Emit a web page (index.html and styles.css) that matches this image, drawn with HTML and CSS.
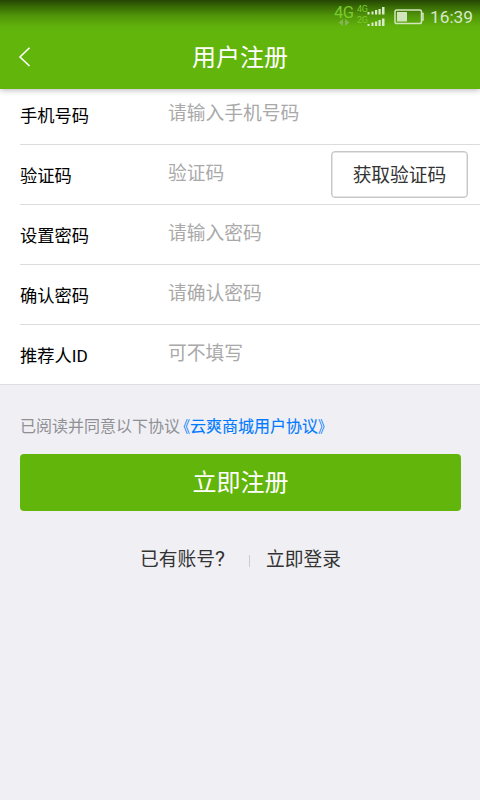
FILE: index.html
```html
<!DOCTYPE html>
<html lang="zh-CN">
<head>
<meta charset="utf-8">
<title>用户注册</title>
<link rel="stylesheet" href="styles.css">
</head>
<body>
<header class="top">
  <div class="status">
    <svg class="signals" width="52" height="28" viewBox="0 0 52 28">
      <g class="net"><text x="1" y="18" font-size="16.500" textLength="20">4G</text>
      <text x="24" y="11.500" font-size="9" textLength="11">4G</text>
      <text x="24" y="23" font-size="9" textLength="11">2G</text></g>
      <path class="arrows" d="M10 19v7l-4.500-3.500zM12 19v7l4.500-3.500z"/>
      <path class="bars" d="M34.500 12h2v2.500h-2zM38.500 11.500h2v3h-2zM42 10h2.200v4.500h-2.200zM45.500 9h2.200v5.500h-2.200zM49 7h2.500v7.500h-2.500zM34.500 24h2v2h-2zM38.500 22.500h2v3.500h-2zM42 21.500h2.200v4.500h-2.200zM45.500 20h2.200v6h-2.200zM49 18.500h2.500v7.500h-2.500z"/>
    </svg>
    <svg class="battery" width="30" height="16" viewBox="0 0 30 16">
      <rect x="1" y="1" width="26.500" height="13.500" rx="1.800"/>
      <path class="charge" d="M3 3h10v9.500H3z"/><path d="M27.500 4.500H29v6.500h-1.500"/>
    </svg>
    <span class="clock">16:39</span>
  </div>
  <div class="nav">
    <svg class="back" width="14" height="22" viewBox="0 0 14 22"><path d="M11.500 1.800 2 11l9.500 9"/></svg>
    <h1>用户注册</h1>
  </div>
</header>
<main>
  <form class="fields">
    <div class="row"><label>手机号码</label><span class="hint">请输入手机号码</span></div>
    <div class="row"><label>验证码</label><span class="hint">验证码</span><button class="code" type="button">获取验证码</button></div>
    <div class="row"><label>设置密码</label><span class="hint">请输入密码</span></div>
    <div class="row"><label>确认密码</label><span class="hint">请确认密码</span></div>
    <div class="row"><label>推荐人ID</label><span class="hint">可不填写</span></div>
  </form>
  <p class="agree">已阅读并同意以下协议<a><span class="open">《</span>云爽商城用户协议<span class="close">》</span></a></p>
  <button class="submit" type="button">立即注册</button>
  <div class="login"><span class="have">已有账号<span class="mark">?</span></span><i></i><a>立即登录</a></div>
</main>
</body>
</html>
```
FILE: styles.css
```css
* { box-sizing: border-box; }
body {
  margin: 0;
  height: 800px;
  overflow: hidden;
  background: #efeff4;
  color: #000;
  font-family: Roboto, "Noto Sans CJK SC", sans-serif;
}
button { font-family: inherit; padding: 0; }
.top {
  position: relative;
  height: 89px;
  background: linear-gradient(#254503 0, #366705 6px, #519609 16px, #60b00b 26px, #62b60b 32px);
  box-shadow: 0 1px 6px rgba(0, 0, 0, .3);
}
.status {
  height: 32px;
  padding: 0 7px 0 0;
  display: flex;
  justify-content: flex-end;
  align-items: flex-start;
}
.signals { margin-right: 9px; }
.net { fill: #7aca2e; font-family: Roboto, sans-serif; }
.arrows { fill: #83b652; }
.bars { fill: #d9ebc6; }
.battery { margin: 9px 6px 0 0; fill: none; stroke: #d3e5bf; stroke-width: 1.5; }
.battery .charge { fill: #d3e5bf; stroke: none; }
.clock { font-size: 17.25px; line-height: 34px; color: #d9e8ca; width: 43px; white-space: nowrap; }
.nav {
  height: 57px;
  display: grid;
  grid-template-columns: 50px 1fr 50px;
}
.back { margin: 14px 0 0 18px; fill: none; stroke: #fff; stroke-width: 1.6; }
h1 {
  margin: 0;
  text-align: center;
  font-size: 24px;
  line-height: 52px;
  font-weight: 400;
  color: #fff;
}
.fields { background: #fff; }
.row {
  height: 60px;
  margin-left: 20px;
  padding-right: 12px;
  display: flex;
  align-items: center;
  border-bottom: 1px solid #dcdcdc;
}
.row:first-child { height: 56px; align-items: flex-end; }
.row:last-child { margin-left: 0; padding-left: 20px; border-color: #dedee0; }
label { width: 148px; font-size: 17.25px; line-height: 56px; padding-top: 3px; }
.hint { flex: 1; font-size: 18.75px; line-height: 56px; padding-bottom: 2px; color: #a9a9a9; }
.code {
  width: 137px;
  height: 47px;
  margin-bottom: 1px;
  padding-bottom: 2px;
  background: #fff;
  border: 1px solid #c6c6c6;
  box-shadow: inset 0 0 0 .5px #ccc;
  border-radius: 4px;
  font-size: 18.75px;
  color: #333;
}
.agree {
  display: flex;
  margin: 29px 20px 15px;
  font-size: 16px;
  line-height: 25px;
  color: #8f8f94;
  white-space: nowrap;
}
.agree a { display: flex; color: #007aff; margin-left: 2px; -webkit-text-stroke: .1px #007aff; }
.open, .close {
  width: 8px;
  -webkit-text-stroke: 0;
  font-feature-settings: "halt";
  transform: scaleX(.85);
}
.open { transform-origin: right; }
.close { transform-origin: left; }
.submit {
  display: block;
  width: 441px;
  height: 57px;
  margin-left: 20px;
  padding-bottom: 4px;
  border: 0;
  border-radius: 4px;
  background: #62b60b;
  color: #fff;
  font-size: 24px;
}
.login {
  display: flex;
  align-items: center;
  margin: 35px 0 0 140px;
  font-size: 18.75px;
  line-height: 28px;
  color: #333;
}
.have { width: 109px; }
.mark { font-size: 21px; line-height: 20px; }
.login i { width: 1px; height: 12px; margin: 1px 16px 0 0; background: #ccc; }
```
